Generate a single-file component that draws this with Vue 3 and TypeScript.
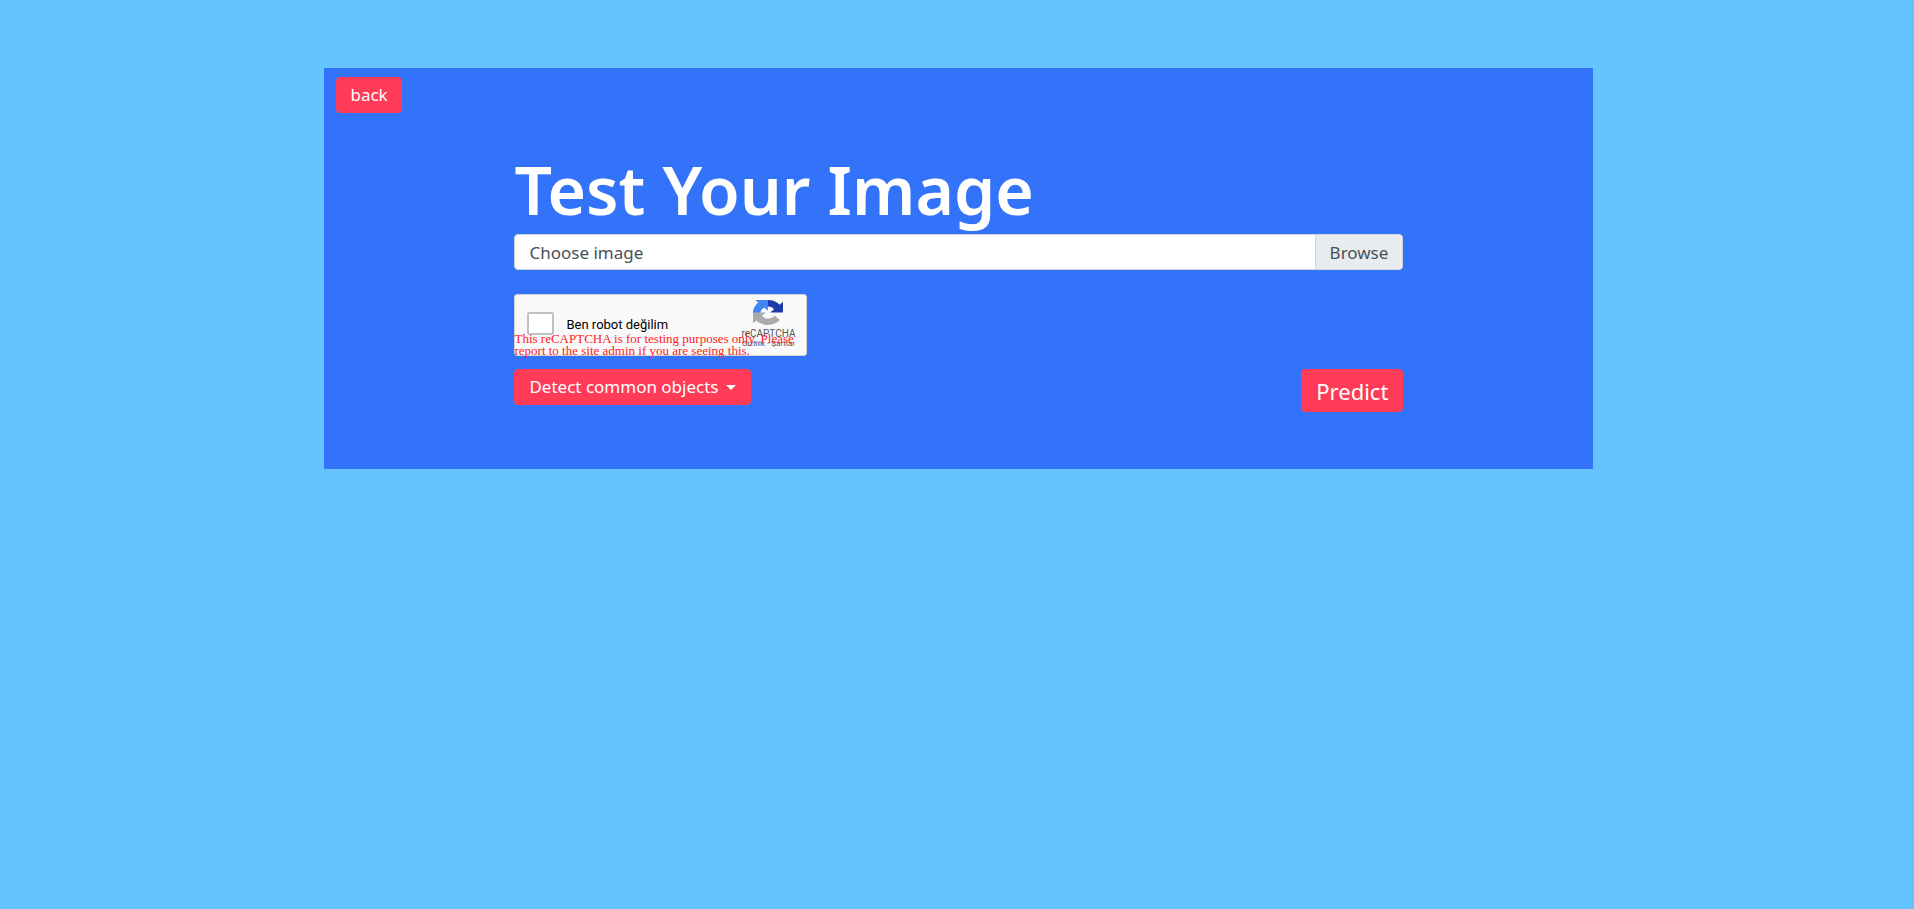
<script setup lang="ts">
import { ref } from 'vue'

const fileName = ref('Choose image')
const mode = ref('common')
const notRobot = ref(false)

function pickFile(event: Event): void {
  const input = event.target as HTMLInputElement
  fileName.value = input.files?.[0]?.name ?? 'Choose image'
}
</script>

<template>
  <main class="panel">
    <button type="button" class="btn back">back</button>
    <form class="content" @submit.prevent>
      <h1>Test Your Image</h1>
      <label class="file" for="image">
        <input id="image" class="file-input" type="file" accept="image/*" @change="pickFile" />
        <span class="file-name">{{ fileName }}</span>
        <span class="file-browse">Browse</span>
      </label>

      <section class="captcha">
        <label class="robot" for="robot">
          <input id="robot" v-model="notRobot" type="checkbox" />
          <span>Ben robot değilim</span>
        </label>
        <div class="brand">
          <svg viewBox="0 0 64 64" preserveAspectRatio="none" aria-hidden="true">
            <path fill="#1c3aa9" d="M64 31.955a33 33 0 0 0-.037-1.37V4.687l-7.16 7.16C50.944 4.674 42.033.093 32.05.093c-10.389 0-19.618 4.96-25.458 12.64l11.736 11.86a15.55 15.55 0 0 1 4.754-5.334c2.05-1.6 4.953-2.906 8.968-2.906.485 0 .86.057 1.135.163 4.976.393 9.288 3.14 11.828 7.124l-8.307 8.307L64 31.953" />
            <path fill="#4285f4" d="M31.862.094a33 33 0 0 0-1.37.037H4.594l7.16 7.16C4.58 13.147 0 22.06 0 32.046c0 10.389 4.96 19.618 12.64 25.458L24.5 45.768a15.55 15.55 0 0 1-5.334-4.754c-1.6-2.05-2.906-4.953-2.906-8.968 0-.485.057-.86.163-1.135.393-4.976 3.14-9.288 7.124-11.828l8.307 8.307L31.86.095" />
            <path fill="#ababab" d="M.001 32.045a33 33 0 0 0 .037 1.37v25.898l7.16-7.16c5.86 7.173 14.774 11.754 24.76 11.754 10.389 0 19.618-4.96 25.458-12.64l-11.736-11.86a15.55 15.55 0 0 1-4.754 5.334c-2.05 1.6-4.953 2.906-8.968 2.906-.485 0-.86-.057-1.135-.163-4.976-.393-9.288-3.14-11.828-7.124l8.307-8.307L.003 32.047" />
          </svg>
          <span class="brand-name">reCAPTCHA</span>
          <span class="brand-links"><a href="#privacy">Gizlilik</a> - <a href="#terms">Şartlar</a></span>
        </div>
        <p class="notice">This reCAPTCHA is for testing purposes only. Please report to the site admin if you are seeing this.</p>
      </section>

      <div class="actions">
        <div class="mode">
          <select v-model="mode" class="btn" aria-label="Detection mode">
            <option value="common">Detect common objects</option>
          </select>
        </div>
        <button type="submit" class="btn predict">Predict</button>
      </div>
    </form>
  </main>
</template>

<style>
html {
  background: #65c4fe;
}
body {
  margin: 0;
}
</style>

<style scoped>
* {
  box-sizing: border-box;
}
.panel {
  width: 66.3%;
  margin: 68px 0 0 16.95%;
  padding: 9px 12px 57px;
  background: #3373f9;
  font-family: "Noto Sans", "Open Sans", sans-serif;
  font-size: 17px;
  line-height: 24px;
}
.btn {
  height: 36px;
  padding: 0 14px;
  border: 1px solid #ff3b57;
  border-radius: 4px;
  background: #ff3b57;
  color: #fff;
  font: inherit;
  cursor: pointer;
}
.back {
  display: block;
  padding: 0 13px;
}
.content {
  width: 71.4%;
  margin: 40px auto 0;
}
h1 {
  margin: 0 0 8px;
  color: #fff;
  font-size: 66px;
  font-weight: 600;
  line-height: 73px;
  white-space: nowrap;
}
.file {
  position: relative;
  display: flex;
  height: 36px;
  overflow: hidden;
  border: 1px solid #ced4da;
  border-radius: 4px;
  background: #fff;
  color: #495057;
  line-height: 36px;
  cursor: pointer;
}
.file-input {
  position: absolute;
  inset: 0;
  width: 100%;
  opacity: 0;
}
.file-name {
  flex: 1;
  padding-left: 14px;
}
.file-browse {
  padding: 0 14px;
  border-left: 1px solid #ced4da;
  background: #e9ecef;
}
.captcha {
  position: relative;
  display: flex;
  justify-content: space-between;
  width: 293px;
  height: 62px;
  margin-top: 24px;
  padding: 0 11px 0 12px;
  border: 1px solid #d3d3d3;
  border-radius: 3px;
  background: #f9f9f9;
  font-family: Roboto, sans-serif;
}
.robot {
  display: flex;
  gap: 12px;
  padding-top: 17px;
  color: #000;
  font-size: 13px;
  line-height: 26px;
}
.robot input {
  appearance: none;
  width: 27px;
  height: 23px;
  margin: 0;
  border: 2px solid #c1c1c1;
  border-radius: 2px;
  background: #fff;
}
.robot input:checked {
  background: #4285f4;
}
.brand {
  display: flex;
  flex-direction: column;
  align-items: center;
  padding-top: 5px;
  color: #555;
  white-space: nowrap;
}
.brand svg {
  width: 30px;
  height: 25px;
}
.brand-name {
  margin-top: 4px;
  font-size: 10px;
  line-height: 10px;
}
.brand-links {
  font-size: 8px;
  line-height: 9px;
}
.brand-links a {
  color: inherit;
  text-decoration: none;
}
.notice {
  position: absolute;
  top: 38px;
  left: -1px;
  width: 291px;
  margin: 0;
  color: #f22;
  font-family: "Liberation Serif", serif;
  font-size: 13px;
  line-height: 12px;
}
.actions {
  display: flex;
  justify-content: space-between;
  align-items: flex-start;
  margin-top: 13px;
}
.mode {
  position: relative;
}
.mode select {
  display: block;
  appearance: none;
  padding-right: 31px;
}
.mode::after {
  position: absolute;
  top: 16px;
  right: 15px;
  border: 5px solid transparent;
  border-top-color: #fff;
  border-bottom: 0;
  content: "";
  pointer-events: none;
}
.predict {
  height: 43px;
  font-size: 22px;
}
</style>
